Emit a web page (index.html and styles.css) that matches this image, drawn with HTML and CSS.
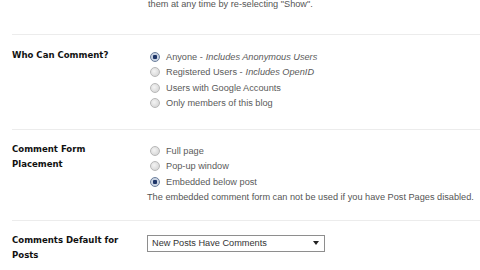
FILE: index.html
```html
<!DOCTYPE html>
<html lang="en">
<head>
    <meta charset="UTF-8">
    <title>Comments Settings</title>
    <link rel="stylesheet" href="styles.css">
</head>
<body>
    <div class="settings">
        <div class="row first">
            <div class="label"></div>
            <div class="field">
                <p class="hint top-hint">them at any time by re-selecting "Show".</p>
            </div>
        </div>

        <div class="row who">
            <div class="label">Who Can Comment?</div>
            <div class="field">
                <ul class="radios">
                    <li><span class="radio checked"></span>Anyone - <em>Includes Anonymous Users</em></li>
                    <li><span class="radio"></span>Registered Users - <em>Includes OpenID</em></li>
                    <li><span class="radio"></span>Users with Google Accounts</li>
                    <li><span class="radio"></span>Only members of this blog</li>
                </ul>
            </div>
        </div>

        <div class="row placement">
            <div class="label">Comment Form<br>Placement</div>
            <div class="field">
                <ul class="radios">
                    <li><span class="radio"></span>Full page</li>
                    <li><span class="radio"></span>Pop-up window</li>
                    <li><span class="radio checked"></span>Embedded below post</li>
                </ul>
                <p class="hint">The embedded comment form can not be used if you have Post Pages disabled.</p>
            </div>
        </div>

        <div class="row defaults">
            <div class="label">Comments Default for<br>Posts</div>
            <div class="field">
                <div class="select">
                    <span>New Posts Have Comments</span>
                    <span class="arrow"></span>
                </div>
            </div>
        </div>
    </div>
</body>
</html>
```

FILE: styles.css
```css
body {
    margin: 0;
    padding: 0;
    background: #fff;
    font-family: 'Liberation Sans', Arial, sans-serif;
    font-size: 9.2px;
    color: #444;
    overflow: hidden;
}

.settings {
    padding-left: 12px;
}

.row {
    display: grid;
    grid-template-columns: 135px 1fr;
    border-top: 1px solid #ececec;
}

.row.first {
    border-top: none;
    padding-bottom: 22px;
}

.label {
    font-family: 'DejaVu Sans Condensed', 'DejaVu Sans', Verdana, sans-serif;
    font-weight: bold;
    font-size: 9.5px;
    line-height: 15px;
    color: #111;
}

.hint {
    margin: 0;
    line-height: 15px;
    color: #555;
}

.top-hint {
    margin-top: -3px;
    padding-left: 1px;
}

.radios {
    list-style: none;
    margin: 0;
    padding: 0 0 0 3px;
}

.radios li {
    display: flex;
    align-items: center;
    height: 15.5px;
    color: #5a5a5a;
}

.radios em {
    margin-left: 3px;
}

.radio {
    box-sizing: border-box;
    width: 10px;
    height: 10px;
    margin-right: 6px;
    border: 1px solid #b8b8b8;
    border-radius: 50%;
    background: radial-gradient(circle at 40% 40%, #f4f4f4, #cfcfcf);
}

.radio.checked {
    border-color: #6c7f9c;
    background: radial-gradient(circle, #1d3467 0 2px, #c9d3e2 2.5px);
}

/* Who can comment */
.row.who {
    padding: 12px 0 18px;
}

.row.who .radios {
    margin-top: 2px;
}

/* Comment form placement */
.row.placement {
    padding: 11px 0 15px;
}

.row.placement .radios {
    margin-top: 2px;
}

/* Comments default */
.row.defaults {
    padding: 11px 0 10px;
}

.select {
    box-sizing: border-box;
    width: 178px;
    height: 17px;
    margin-top: 3px;
    padding: 0 5px 0 4px;
    display: flex;
    align-items: center;
    justify-content: space-between;
    border: 1px solid #8e8e8e;
    background: #fff;
    color: #333;
}

.arrow {
    width: 0;
    height: 0;
    border-left: 3.5px solid transparent;
    border-right: 3.5px solid transparent;
    border-top: 4px solid #222;
}
```
